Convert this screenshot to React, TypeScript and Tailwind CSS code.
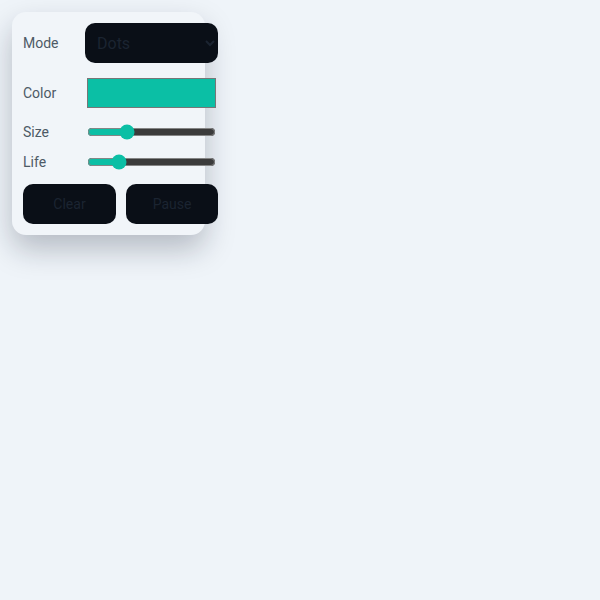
import React, { useState } from 'react';

const App: React.FC = () => {
  const [mode, setMode] = useState('dots');
  const [color, setColor] = useState('#0bbfa5');
  const [size, setSize] = useState(28);
  const [life, setLife] = useState(21);

  return (
    <div className="min-h-screen w-full bg-[#eff4f9] p-3 font-['Roboto',sans-serif]">
      <div className="w-[193px] h-[223px] rounded-[14px] bg-[#f1f5f9] shadow-[0_14px_30px_rgba(15,23,42,0.26)] px-[11px] pt-[11px]">
        <div className="w-[195px] flex flex-col">
          <div className="flex items-center h-10">
            <label className="w-[62px] text-[14px] text-[#4d5a66]">Mode</label>
            <select
              value={mode}
              onChange={(e) => setMode(e.target.value)}
              className="w-[133px] h-10 pl-2 pr-1 rounded-[10px] bg-[#0a0f17] text-[#1b2431] text-[16px] border-0 outline-none"
            >
              <option value="dots">Dots</option>
              <option value="lines">Lines</option>
              <option value="stars">Stars</option>
            </select>
          </div>

          <div className="flex items-center h-[38px] mt-[11px]">
            <label className="w-[62px] text-[14px] text-[#4d5a66]">Color</label>
            <input
              type="color"
              value={color}
              onChange={(e) => setColor(e.target.value)}
              className="w-[133px] h-[38px] p-0 border-0 bg-transparent"
            />
          </div>

          <div className="flex items-center h-5 mt-[10px]">
            <label className="w-[62px] text-[14px] text-[#4d5a66]">Size</label>
            <input
              type="range"
              min={0}
              max={100}
              value={size}
              onChange={(e) => setSize(Number(e.target.value))}
              className="w-[129px] mx-[2px] accent-[#0bbfa5] [color-scheme:dark]"
            />
          </div>

          <div className="flex items-center h-5 mt-[10px]">
            <label className="w-[62px] text-[14px] text-[#4d5a66]">Life</label>
            <input
              type="range"
              min={0}
              max={100}
              value={life}
              onChange={(e) => setLife(Number(e.target.value))}
              className="w-[129px] mx-[2px] accent-[#0bbfa5] [color-scheme:dark]"
            />
          </div>

          <div className="flex gap-[10px] mt-[12px]">
            <button className="w-[93px] h-10 rounded-[10px] bg-[#0a0f17] text-[#1b2431] text-[14px]">
              Clear
            </button>
            <button className="w-[92px] h-10 rounded-[10px] bg-[#0a0f17] text-[#1b2431] text-[14px]">
              Pause
            </button>
          </div>
        </div>
      </div>
    </div>
  );
};

export default App;
